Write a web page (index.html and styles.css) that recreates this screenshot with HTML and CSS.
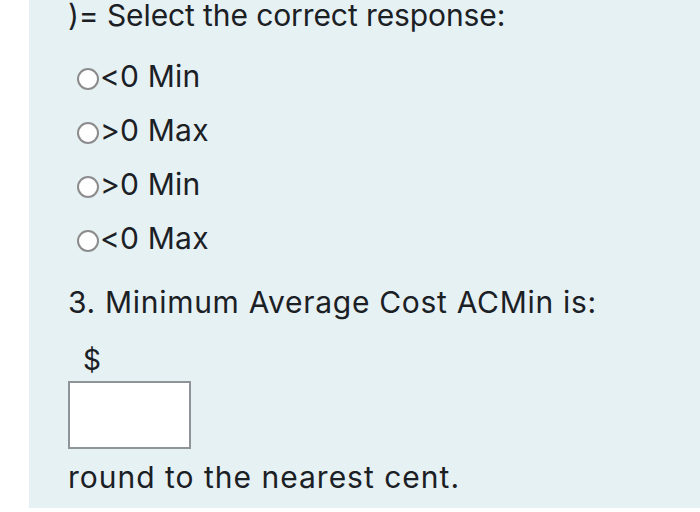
FILE: index.html
```html
<!DOCTYPE html>
<html lang="en">
<head>
    <meta charset="UTF-8">
    <title>Question</title>
    <link rel="stylesheet" href="styles.css">
</head>
<body>
    <div class="panel">
        <div class="prompt">)= Select the correct response:</div>
        <div class="choices">
            <label class="choice"><span class="radio"></span>&lt;0 Min</label>
            <label class="choice"><span class="radio"></span>&gt;0 Max</label>
            <label class="choice"><span class="radio"></span>&gt;0 Min</label>
            <label class="choice"><span class="radio"></span>&lt;0 Max</label>
        </div>
        <div class="question">3. Minimum Average Cost ACMin is:</div>
        <div class="currency">$</div>
        <div class="answer"></div>
        <div class="note">round to the nearest cent.</div>
    </div>
</body>
</html>
```

FILE: styles.css
```css
body {
    margin: 0;
    background: #fff;
    font-family: Inter, "Liberation Sans", sans-serif;
    color: #1b2025;
}
.panel {
    margin-left: 29px;
    height: 508px;
    background-color: #e6f1f4;
    padding-left: 39px;
    box-sizing: border-box;
    overflow: hidden;
}
.prompt {
    font-size: 30px;
    line-height: 30px;
    letter-spacing: -0.1px;
}
.choices {
    display: flex;
    flex-direction: column;
    margin-top: 19px;
    padding-left: 9px;
}
.choice {
    display: flex;
    align-items: center;
    height: 54px;
    font-size: 30px;
    letter-spacing: 0.2px;
}
.radio {
    width: 18px;
    height: 18px;
    margin-top: 5px;
    margin-right: 1px;
    border: 2px solid #8c8c8c;
    border-radius: 50%;
    background: #fff;
}
.question {
    font-size: 30px;
    line-height: 34px;
    letter-spacing: 0.7px;
    margin-top: 20px;
}
.currency {
    font-size: 28px;
    line-height: 34px;
    margin-top: 24px;
    padding-left: 15px;
}
.answer {
    width: 119px;
    height: 64px;
    margin-top: 4px;
    background: #fff;
    border: 2px solid #8e9498;
}
.note {
    font-size: 30px;
    line-height: 34px;
    letter-spacing: 1px;
    margin-top: 11px;
}
```
